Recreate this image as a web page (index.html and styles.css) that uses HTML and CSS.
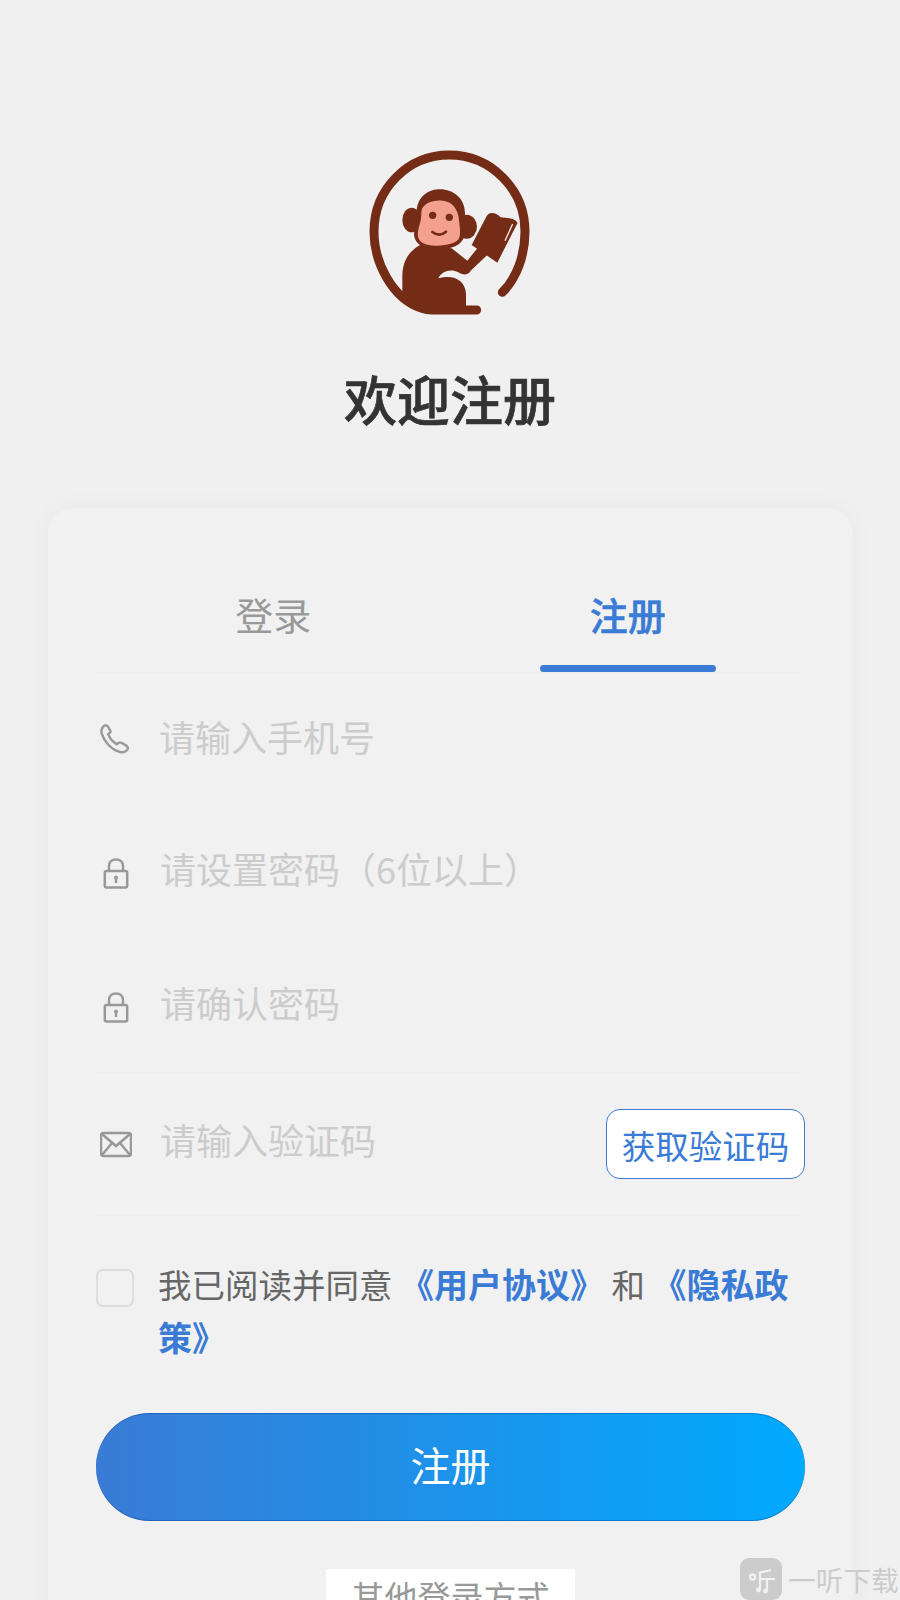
FILE: index.html
```html
<!DOCTYPE html>
<html lang="zh-CN">
<head>
  <meta charset="UTF-8">
  <meta name="viewport" content="width=device-width, initial-scale=1.0">
  <title>欢迎注册</title>
  <link rel="stylesheet" href="styles.css">
</head>
<body>
  <div class="header">
    <svg class="logo" viewBox="0 0 660 600">
      <path class="logo-ring" d="M487 487 C530 445 555 375 555 305 C555 175 450 75 328 75 C205 75 102 175 102 305 C102 395 155 505 245 535 Q260 540 275 540 H410"/>
      <path class="logo-fill" d="M240 345 C205 365 187 395 187 440 L187 490 L240 540 L378 540 L378 490 C375 450 340 432 295 445 C305 425 330 415 355 427 C370 437 385 435 392 422 L445 372 L420 345 L382 392 L335 355 Z"/>
      <path class="logo-fill" d="M395 345 L438 262 C445 245 465 245 482 262 C500 265 520 262 533 278 L472 398 Z"/>
      <path class="logo-line" d="M518 282 L495 332"/>
      <ellipse class="logo-fill" cx="215" cy="270" rx="28" ry="37"/>
      <ellipse class="logo-fill" cx="380" cy="290" rx="31" ry="36"/>
      <path class="logo-fill" d="M230 240 C235 195 270 178 300 178 C340 178 375 205 375 250 L372 320 C365 345 335 358 295 358 C255 358 225 345 222 315 C222 295 235 280 230 240 Z"/>
      <path class="logo-face" d="M245 240 C250 220 280 208 310 212 C335 215 352 235 356 262 C358 285 364 310 357 325 C345 350 265 354 243 335 C230 325 232 305 240 280 C245 265 243 250 245 240 Z"/>
      <circle class="logo-fill" cx="278" cy="256" r="11"/>
      <circle class="logo-fill" cx="328" cy="262" r="11"/>
      <path class="logo-mouth" d="M277 306 Q298 322 318 305"/>
    </svg>
    <h1 class="title">欢迎注册</h1>
  </div>

  <div class="card">
    <div class="tabs">
      <div class="tab">登录</div>
      <div class="tab tab-active">注册</div>
    </div>

    <div class="row row-phone">
      <svg class="icon" viewBox="1 0 33 33"><path d="M4.5 3.5 C6 1.8 8 2 9 3.5 L11.5 7.5 C12.2 8.8 11.8 9.8 10.5 10.8 L9.5 11.6 C11 15.5 14 19.5 18.5 22 L20 20.6 C21 19.8 22 19.8 23 20.4 L28.5 23.6 C30 24.6 30.2 26.4 29 27.8 C27 30 24 30.8 20.5 29.6 C11 26.2 5 18 2.8 11 C2 8 2.8 5.3 4.5 3.5 Z"/></svg>
      <span class="placeholder">请输入手机号</span>
    </div>
    <div class="row row-pass">
      <svg class="icon" viewBox="0 0 32 32"><path d="M9 14 V9 C9 5 12 2.5 16 2.5 C20 2.5 23 5 23 9 V14"/><rect x="4.8" y="14" width="22.4" height="16.5" rx="1.8"/><path class="icon-key" d="M16 19.5 V26"/><circle class="icon-dot" cx="16" cy="20.5" r="2"/></svg>
      <span class="placeholder">请设置密码（6位以上）</span>
    </div>
    <div class="row row-confirm">
      <svg class="icon" viewBox="0 0 32 32"><path d="M9 14 V9 C9 5 12 2.5 16 2.5 C20 2.5 23 5 23 9 V14"/><rect x="4.8" y="14" width="22.4" height="16.5" rx="1.8"/><path class="icon-key" d="M16 19.5 V26"/><circle class="icon-dot" cx="16" cy="20.5" r="2"/></svg>
      <span class="placeholder">请确认密码</span>
    </div>
    <div class="row row-code">
      <svg class="icon" viewBox="0 0 32 32"><rect x="1" y="4" width="30" height="23" rx="2.5"/><path d="M2 5 L16 17 L30 5 M2 26 L12 14 M30 26 L20 14"/></svg>
      <span class="placeholder">请输入验证码</span>
      <button class="code-btn">获取验证码</button>
    </div>

    <div class="agree">
      <div class="checkbox"></div>
      <p class="agree-text">我已阅读并同意 <a class="link">《用户协议》</a> 和 <a class="link">《隐私政</a><a class="link">策》</a></p>
    </div>

    <button class="submit">注册</button>

    <div class="other"><span class="other-text">其他登录方式</span></div>
  </div>

  <div class="watermark">
    <svg class="wm-icon" viewBox="0 0 42 42">
      <rect class="wm-bg" width="42" height="42" rx="9"/>
      <circle class="wm-stroke" cx="12.5" cy="19" r="2.6"/>
      <path class="wm-stroke" d="M31 12 L20 14.5 V31 M20 21 H35 M27 21 V32"/>
      <circle class="wm-dot" cx="18.5" cy="32" r="2.4"/>
      <circle class="wm-dot" cx="25.5" cy="33" r="2.4"/>
    </svg>
    <span class="wm-text">一听下载</span>
  </div>
</body>
</html>
```

FILE: styles.css
```css
body {
  margin: 0;
  height: 1600px;
  overflow: hidden;
  position: relative;
  background: #f0f0f0;
  font-family: "Noto Sans CJK SC", "Noto Sans", sans-serif;
}
.header {
  height: 508px;
  padding-top: 130px;
  box-sizing: border-box;
  text-align: center;
}
.logo {
  display: block;
  width: 220px;
  height: 200px;
  margin: 0 auto;
}
.logo-ring {
  fill: none;
  stroke: #752c17;
  stroke-width: 27;
  stroke-linecap: round;
}
.logo-fill {
  fill: #752c17;
}
.logo-face {
  fill: #f4a08e;
}
.logo-line {
  fill: none;
  stroke: #f6e9e4;
  stroke-width: 4;
}
.logo-mouth {
  fill: none;
  stroke: #752c17;
  stroke-width: 8;
  stroke-linecap: round;
}
.title {
  margin: 30px 0 0;
  font-size: 53px;
  line-height: 76px;
  font-weight: 500;
  -webkit-text-stroke: 0.7px #333;
  color: #333;
}
.card {
  margin: 0 47px 0 48px;
  padding: 0 48px;
  height: 1200px;
  box-sizing: border-box;
  background: #f1f1f1;
  border-radius: 26px;
  box-shadow: 0 0 24px rgba(0, 0, 0, 0.04);
}
.tabs {
  display: flex;
  height: 165px;
  border-bottom: 1px solid #eeeeee;
  box-sizing: border-box;
}
.tab {
  flex: 1;
  display: flex;
  align-items: center;
  justify-content: center;
  padding-top: 46px;
  box-sizing: border-box;
  position: relative;
  font-size: 38px;
  color: #999;
}
.tab-active {
  color: #3a7bd5;
  font-weight: 500;
  -webkit-text-stroke: 0.5px #3a7bd5;
}
.tab-active::after {
  content: "";
  position: absolute;
  left: 89px;
  right: 89px;
  bottom: 0;
  height: 7px;
  border-radius: 4px;
  background: #3a7bd5;
}
.row {
  display: flex;
  align-items: center;
  box-sizing: border-box;
  border-bottom: 1px solid #eeeeee;
}
.row-phone {
  height: 132px;
}
.row-pass {
  height: 135px;
}
.row-confirm {
  height: 133px;
}
.row-code {
  height: 143px;
}
.icon {
  width: 32px;
  height: 32px;
  margin: 1px 28px 0 4px;
  flex: none;
  fill: none;
  stroke: #999;
  stroke-width: 2.5;
}
.icon-key {
  stroke-width: 2.5;
}
.icon-dot {
  fill: #999;
  stroke: none;
}
.placeholder {
  font-size: 36px;
  color: #ccc;
  line-height: 50px;
  margin-top: -9px;
}
.row-phone .icon {
  margin-right: 27px;
}
.row-phone .placeholder {
  margin-top: -5px;
}
.row-code .placeholder {
  margin-top: -11px;
}
.code-btn {
  margin-left: auto;
  width: 199px;
  height: 70px;
  padding: 0;
  background: #fff;
  border: 1px solid #3a7bd5;
  border-radius: 14px;
  font-family: inherit;
  font-size: 33.5px;
  color: #3a7bd5;
}
.agree {
  display: flex;
  align-items: flex-start;
  margin-top: 53px;
}
.checkbox {
  width: 38px;
  height: 38px;
  flex: none;
  box-sizing: border-box;
  border: 2px solid #ddd;
  border-radius: 7px;
  margin-right: 24px;
}
.agree-text {
  margin: -11px 0 0;
  font-size: 33.5px;
  line-height: 52.5px;
  color: #666;
}
.link {
  color: #3a7bd5;
  font-size: 34px;
  font-weight: 700;
}
.submit {
  display: block;
  width: 100%;
  height: 108px;
  margin-top: 50px;
  padding: 0 0 6px;
  border: none;
  border-radius: 54px;
  background: linear-gradient(90deg, #3a7bd5, #00aaff);
  box-shadow: inset 0 1px rgba(0, 60, 140, 0.4), inset 0 -1px rgba(0, 60, 140, 0.4);
  font-family: inherit;
  font-size: 40px;
  color: #fff;
}
.other {
  margin-top: 48px;
  text-align: center;
}
.other-text {
  display: inline-block;
  width: 249px;
  background: #fff;
  font-size: 33px;
  line-height: 54px;
  color: #999;
}
.watermark {
  position: absolute;
  left: 740px;
  top: 1558px;
  display: flex;
  align-items: center;
  gap: 6px;
}
.wm-icon {
  width: 42px;
  height: 42px;
  flex: none;
}
.wm-bg {
  fill: #ccc;
}
.wm-stroke {
  fill: none;
  stroke: #f2f2f2;
  stroke-width: 2.2;
}
.wm-dot {
  fill: #f2f2f2;
}
.wm-text {
  font-size: 27.7px;
  color: #ccc;
}
```
